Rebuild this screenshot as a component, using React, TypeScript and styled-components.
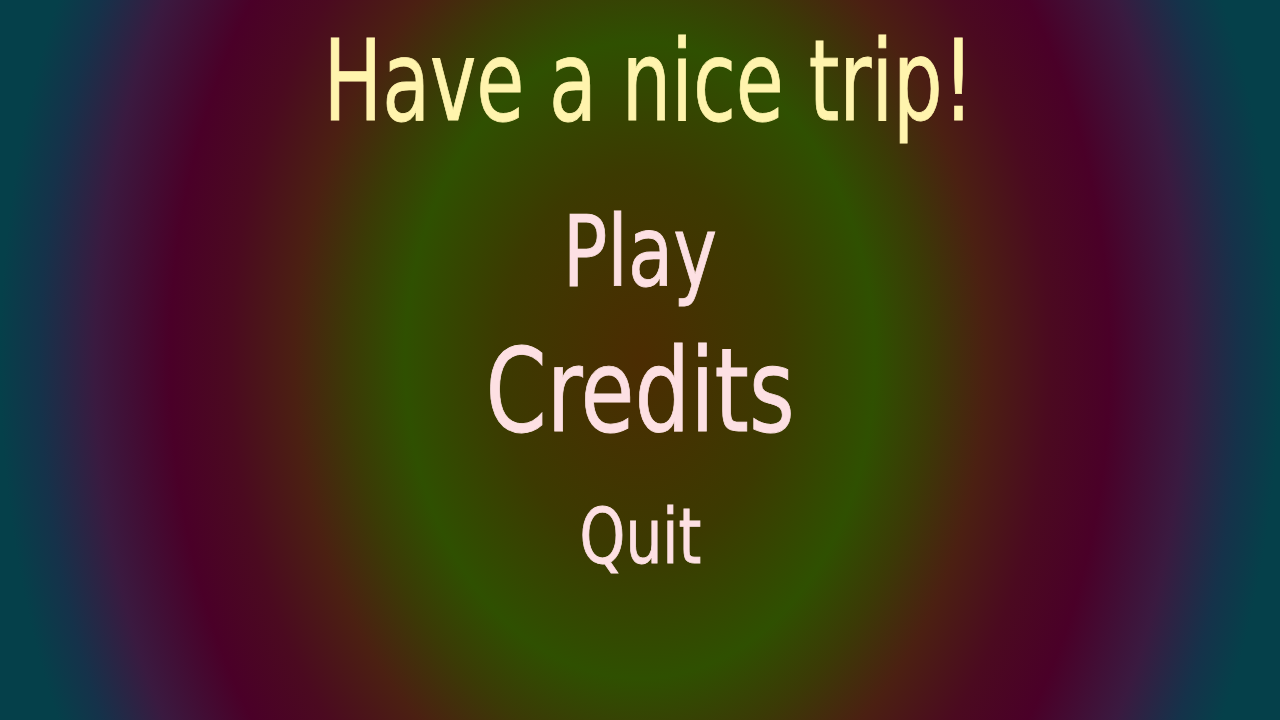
import React from "react";
import styled, { createGlobalStyle } from "styled-components";

const GlobalStyle = createGlobalStyle`
  html, body {
    margin: 0;
    padding: 0;
    height: 100%;
    overflow: hidden;
  }
  #root {
    height: 100%;
  }
`;

const Screen = styled.main`
  box-sizing: border-box;
  width: 100%;
  height: 100vh;
  padding-top: 25px;
  display: flex;
  flex-direction: column;
  align-items: center;
  font-family: "DejaVu Sans Condensed", "DejaVu Sans", sans-serif;
  background: radial-gradient(
    ellipse 620px 840px at 50% 50%,
    #4b2c02 0px,
    #3c3a01 140px,
    #2f5001 235px,
    #3b3a06 290px,
    #4b2012 345px,
    #4b0a20 410px,
    #4a0028 470px,
    #3a1a40 545px,
    #15324a 600px,
    #05404a 640px
  );
`;

const Title = styled.h1`
  margin: 0 0 66px 17px;
  font-size: 112px;
  line-height: 1;
  font-weight: 400;
  color: #fff4ad;
  transform: scaleX(0.775);
  -webkit-text-stroke: 0.8px #fff4ad;
`;

const Menu = styled.nav`
  display: flex;
  flex-direction: column;
  align-items: center;
`;

const MenuItem = styled.button<{ $size: number; $gap: number }>`
  margin-top: ${(p) => p.$gap}px;
  padding: 0;
  border: none;
  background: none;
  font-family: inherit;
  font-size: ${(p) => p.$size}px;
  line-height: 1;
  color: #fde0e3;
  -webkit-text-stroke: 0.8px #fde0e3;
  cursor: pointer;
  transform: scaleX(0.84);
`;

export default function App() {
  return (
    <>
      <GlobalStyle />
      <Screen>
        <Title>Have a nice trip!</Title>
        <Menu>
          <MenuItem $size={98} $gap={0}>Play</MenuItem>
          <MenuItem $size={116} $gap={32}>Credits</MenuItem>
          <MenuItem $size={77} $gap={49}>Quit</MenuItem>
        </Menu>
      </Screen>
    </>
  );
}
